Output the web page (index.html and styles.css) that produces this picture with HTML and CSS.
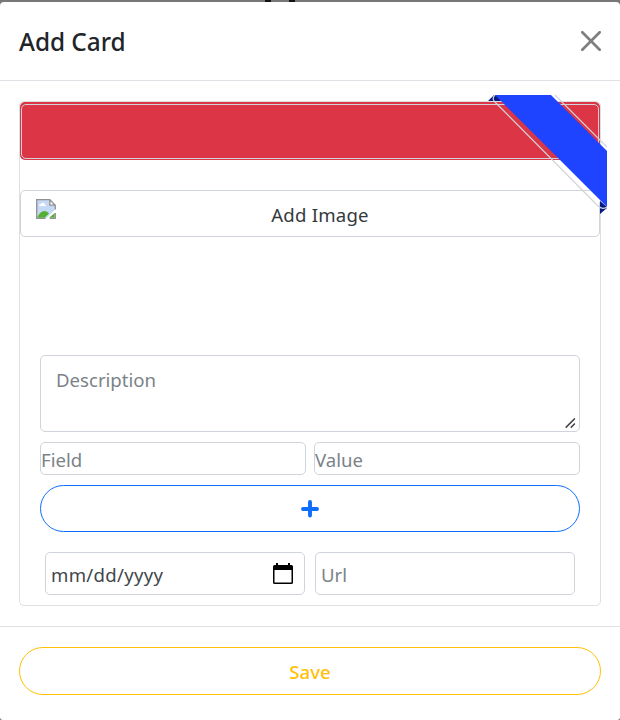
FILE: index.html
```html
<!DOCTYPE html>
<html lang="en">
<head>
<meta charset="utf-8">
<title>Add Card</title>
<link rel="stylesheet" href="styles.css">
</head>
<body>
<svg class="backdrop-detail" width="40" height="2"><path d="M1 0h6v2H1zM25 0h6v2h-6z" fill="#111"/></svg>
<div class="modal">
  <header class="modal-header">
    <h1 class="title">Add Card</h1>
    <button class="close" aria-label="Close"><svg width="20" height="20" viewBox="0 0 20 20"><path d="M1.3 1.3 18.7 18.7M18.7 1.3 1.3 18.7" stroke="#7f7f7f" stroke-width="2.7" stroke-linecap="round"/></svg></button>
  </header>
  <main class="modal-body">
    <section class="card">
      <div class="banner"><div class="banner-input"></div></div>
      <div class="image-button">
        <svg class="broken" width="20" height="20" viewBox="0 0 20 20">
          <path d="M.7.7h13.1l5.5 5.5v4.1L10.2 19.3H.7z" fill="#c5d9f7"/>
          <path d="M3 7q0-2 2-2 1-2 3-1 1 1 1 2 1 0 1 1z" fill="#fff"/>
          <path d="M1.3 18.7Q4 12 8.5 12q3 0 4.500 2.500L8.700 18.700z" fill="#53b031"/>
          <path d="M13 18.700 18.700 14v4.700z" fill="#53b031"/>
          <path d="M13.8.7v5.5h5.5z" fill="#fff"/>
          <path d="M9.5 19.3H.7V.7h13.1l5.5 5.5v4.3M13.8.7v5.5h5.5M19.3 14v5.3h-5.5" fill="none" stroke="#919191" stroke-width="1.3"/>
        </svg>
        <span class="text">Add Image</span>
      </div>
      <div class="fields">
        <div class="box description"><span class="text">Description</span>
          <svg class="grip" width="11" height="11" viewBox="0 0 11 11"><path d="M.7 9.600 9.900.4M5.800 9.600l4.100-4.100" stroke="#444" stroke-width="1.5"/></svg>
        </div>
        <div class="pair">
          <div class="box"><span class="text">Field</span></div>
          <div class="box"><span class="text">Value</span></div>
        </div>
        <button class="pill add" aria-label="Add field"><svg width="18" height="18" viewBox="0 0 18 18"><path d="M9 2v13.500M2 9h14" stroke="#0d6efd" stroke-width="3.900" stroke-linecap="round"/></svg></button>
        <div class="details">
          <div class="box date"><span class="text">mm/dd/yyyy</span>
            <svg width="20" height="21" viewBox="0 0 20 21"><path d="M3 0h2v2h10V0h2v2h1.500Q20 2 20 3.500v16Q20 21 18.500 21h-17Q0 21 0 19.500v-16Q0 2 1.500 2H3zM1.500 7v12.500h17V7z" fill="#000" fill-rule="evenodd"/></svg>
          </div>
          <div class="box url"><span class="text">Url</span></div>
        </div>
      </div>
      <svg class="ribbon" width="119" height="120" viewBox="488 95 119 120">
        <path d="M590 190h10v12h-6z" fill="#fff"/>
        <path d="M488 101l6-6h2l6 6zM600 201l7 6v1l-7 6z" fill="#071a82"/>
        <path d="M495 95h56l56 56v56z" fill="#1e44ff"/>
        <path d="M495 95q-3 3-1 6L598 206q4 4 9 1M555 95l52 52" fill="none" stroke="#ced4da" stroke-width="1.2"/>
      </svg>
    </section>
  </main>
  <footer class="modal-footer"><button class="pill save"><span class="text">Save</span></button></footer>
</div>
</body>
</html>
```
FILE: styles.css
```css
* { box-sizing: border-box; }
body {
  margin: 0;
  height: 720px;
  padding-top: 2px;
  position: relative;
  overflow: hidden;
  background: #777;
  font: 18.6px/30px "Noto Sans", "Open Sans", sans-serif;
  color: #212529;
}
.backdrop-detail { position: absolute; top: 0; left: 264px; }
.modal {
  height: 718px;
  background: #fff;
  border-radius: 4px 4px 3px 3px;
}
.modal-header {
  height: 79px;
  display: flex;
  align-items: center;
  justify-content: space-between;
  padding: 0 19px;
  border-bottom: 1px solid #dee2e6;
}
.title { margin: 2px 0 0; font-size: 24.4px; font-weight: 500; letter-spacing: -.05px; }
button { font: inherit; background: none; border: 0; padding: 0; }
.close { display: flex; }
.modal-body { padding: 20px 19px; }
.card {
  position: relative;
  height: 505px;
  border: 1px solid #dfdfdf;
  border-radius: 5px;
}
.banner {
  height: 58px;
  padding: 2px 1px 1px;
  background: #dc3545;
  border-radius: 5px;
}
.banner-input { height: 55px; border: 1px solid #ced4da; border-radius: 5px; }
.image-button {
  height: 47px;
  margin-top: 30px;
  display: grid;
  grid-template-columns: 20px 1fr;
  align-items: center;
  text-align: center;
  padding: 0 15px;
  border: 1px solid #ced4da;
  border-radius: 5px;
  color: #34393e;
}
.broken { margin-bottom: 10px; }
.image-button .text { padding-top: 2px; letter-spacing: .2px; }
.fields { padding: 118px 20px 0; }
.box {
  display: flex;
  align-items: center;
  border: 1px solid #ced4da;
  border-radius: 5px;
  color: #7b8389;
}
.box .text { padding-top: 2px; }
.description {
  position: relative;
  height: 77px;
  align-items: flex-start;
  padding: 7px 15px;
}
.grip { position: absolute; right: 3px; bottom: 2px; }
.pair {
  display: grid;
  grid-template-columns: 1fr 1fr;
  gap: 8px;
  margin: 10px 0;
}
.pair .box { height: 33px; }
.pill {
  display: flex;
  justify-content: center;
  align-items: center;
  width: 100%;
  border: 1px solid;
  border-radius: 24px;
}
.add { height: 47px; color: #0d6efd; padding-top: 1px; }
.details {
  display: grid;
  grid-template-columns: 1fr 1fr;
  gap: 10px;
  margin: 20px 5px 0;
}
.details .box { height: 43px; padding: 0 5px; }
.date { justify-content: space-between; }
.details .date { padding-right: 11px; color: #42464a; letter-spacing: .3px; }
.ribbon { position: absolute; left: 468px; top: -7px; }
.modal-footer { border-top: 1px solid #dee2e6; padding: 20px 19px; }
.save { height: 48px; color: #ffc107; font-weight: 500; }
.save .text { padding-top: 1px; }
```
